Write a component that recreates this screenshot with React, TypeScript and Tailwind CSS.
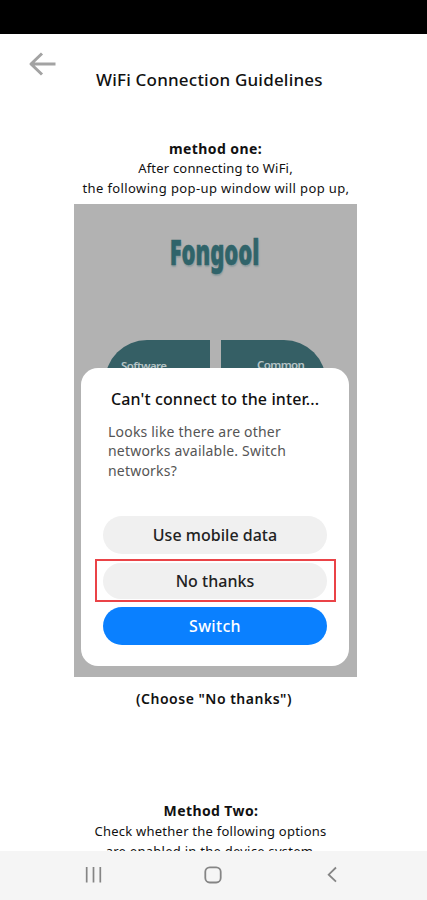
import clsx from 'clsx';

interface DialogAction {
  label: string;
  primary?: boolean;
  highlighted?: boolean;
}

const actions: DialogAction[] = [
  { label: 'Use mobile data' },
  { label: 'No thanks', highlighted: true },
  { label: 'Switch', primary: true },
];

function Header() {
  return (
    <header className="flex h-[100px] pl-[28px]">
      <button type="button" aria-label="Back" className="mt-[18px] h-[24px] w-[28px] shrink-0">
        <svg width="28" height="24" viewBox="0 0 28 24" fill="none" stroke="#a3a3a3" strokeWidth="3">
          <path d="M27.5 12H3M14 1.5L3 12L14 22.5" strokeLinejoin="round" />
        </svg>
      </button>
      <h1 className="ml-[40px] mt-[34px] whitespace-nowrap text-[17px] font-medium leading-[24px] tracking-[0.2px]">
        WiFi Connection Guidelines
      </h1>
    </header>
  );
}

function ConnectionDialog() {
  return (
    <div className="ml-[7px] h-[298px] w-[268px] rounded-[17px] bg-white pt-[19px]">
      <h2 className="whitespace-nowrap pl-[30px] text-[16px] font-medium leading-[24px] tracking-[0.12px]">
        Can't connect to the inter...
      </h2>
      <p className="mt-[11px] pl-[27px] text-[14px] leading-[19.4px] tracking-[0.2px] text-[#555]">
        Looks like there are other
        <br />
        networks available. Switch
        <br />
        networks?
      </p>
      <div className="mt-[36px] flex flex-col items-center">
        {actions.map((action) => (
          <div
            key={action.label}
            className={clsx(
              'flex items-center justify-center',
              action.highlighted && 'my-[5px] h-[43px] w-[241px] border-2 border-[#ea4347]',
            )}
          >
            <button
              type="button"
              className={clsx(
                'w-[224px] rounded-full text-[16px] font-medium',
                action.highlighted ? 'h-[36px]' : 'h-[38px]',
                action.primary
                  ? 'bg-[#0a80ff] tracking-[0.3px] text-white'
                  : 'bg-[#f0f0f0] tracking-[0.02px] text-[#222]',
              )}
            >
              {action.label}
            </button>
          </div>
        ))}
      </div>
    </div>
  );
}

function PopupPreview() {
  return (
    <div className="ml-[74px] h-[473px] w-[283px] bg-[#b2b2b2]">
      <div className="flex h-[136px] justify-center pr-[2px] pt-[24px]">
        <span className="h-[48px] origin-center scale-x-[0.61] font-['Noto_Sans'] text-[36px] font-black leading-[48px] text-[#30646a] [-webkit-text-stroke:0.5px_#30646a] [text-shadow:1px_2px_2px_#8b9b9d]">
          Fongool
        </span>
      </div>
      <div className="flex h-[28px] justify-center gap-[11px] overflow-hidden text-[11.5px] font-semibold leading-[16px] tracking-[-0.6px] text-[#b5c4c6]">
        <div className="h-[80px] w-[105px] shrink-0 rounded-tl-[42px] bg-[#355f65] pl-[16px] pt-[18px]">Software</div>
        <div className="h-[80px] w-[105px] shrink-0 rounded-tr-[42px] bg-[#355f65] pl-[36px] pt-[17px]">Common</div>
      </div>
      <ConnectionDialog />
    </div>
  );
}

function NavigationBar() {
  return (
    <nav className="flex h-[49px] shrink-0 items-start justify-between bg-[#f5f5f5] pl-[85px] pr-[90px] pt-[15px]">
      <svg width="17" height="17" viewBox="0 0 17 17" stroke="#858585" strokeWidth="1.7">
        <path d="M1.7 1V16.5M8.5 1V16.5M15.3 1V16.5" />
      </svg>
      <svg className="-ml-[4px]" width="18" height="18" viewBox="0 0 18 18" fill="none" stroke="#858585" strokeWidth="1.8">
        <rect x="1.3" y="1.3" width="15.4" height="15.2" rx="4.5" />
      </svg>
      <svg width="10" height="17" viewBox="0 0 10 17" fill="none" stroke="#858585" strokeWidth="1.8">
        <path d="M9 1.5L1.7 8.7L9 15.7" />
      </svg>
    </nav>
  );
}

export default function App() {
  return (
    <div className="flex h-[900px] w-[427px] flex-col overflow-hidden bg-white font-['Noto_Sans',sans-serif] text-[#111]">
      <div className="h-[34px] shrink-0 bg-black" />
      <main className="min-h-0 flex-1 overflow-hidden">
        <Header />
        <section className="h-[70px] whitespace-nowrap pl-[4px] pt-[5px] text-center text-[13px] leading-[20px]">
          <h3 className="text-[14px] font-bold leading-[19px] tracking-[0.4px]">method one:</h3>
          <p className="tracking-[0.2px]">After connecting to WiFi,</p>
          <p className="pl-[1px] tracking-[0.38px]">the following pop-up window will pop up,</p>
        </section>
        <PopupPreview />
        <p className="mt-[12px] pl-[1px] text-center text-[14px] font-semibold leading-[20px] tracking-[0.5px]">
          (Choose "No thanks")
        </p>
        <section className="mt-[92px] whitespace-nowrap text-center text-[13px] leading-[20px]">
          <h3 className="pr-[5px] text-[14px] font-bold tracking-[0.4px]">Method Two:</h3>
          <p className="pr-[6px] tracking-[0.24px]">Check whether the following options</p>
          <p className="pr-[8px] tracking-[0.26px]">are enabled in the device system</p>
        </section>
      </main>
      <NavigationBar />
    </div>
  );
}
